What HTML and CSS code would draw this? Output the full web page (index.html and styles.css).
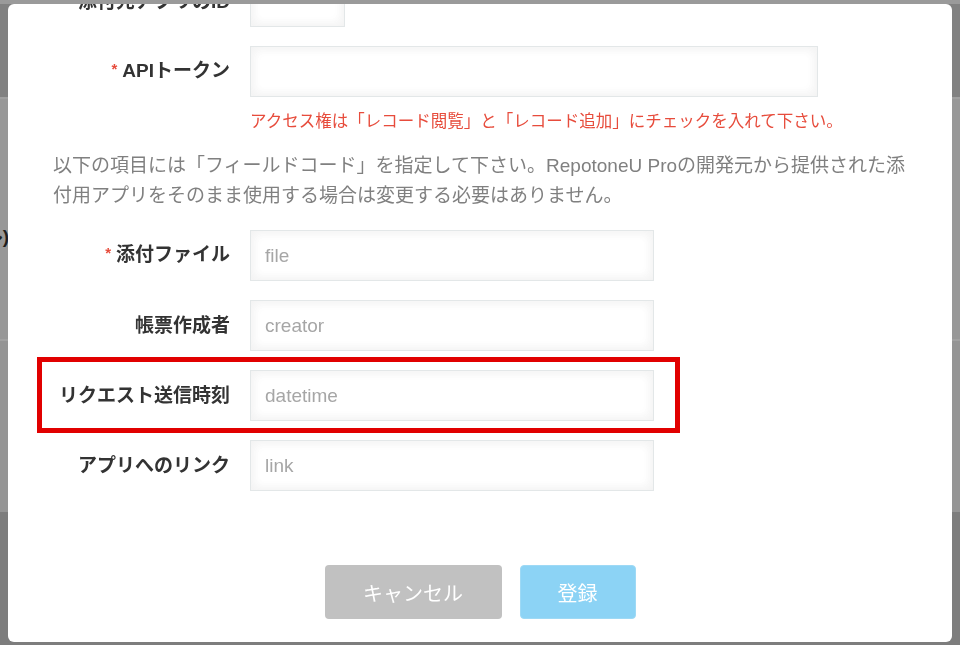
FILE: index.html
```html
<!DOCTYPE html>
<html lang="ja">
<head>
    <meta charset="UTF-8">
    <meta name="viewport" content="width=device-width, initial-scale=1.0">
    <title>RepotoneU Pro 添付設定</title>
    <link rel="stylesheet" href="styles.css">
</head>
<body>
    <!-- page behind the dialog -->
    <div class="page">
        <div class="page-label">（ファイル)</div>
    </div>

    <div class="modal">
        <div class="modal-body">
            <div class="row">
                <label class="label">添付先アプリのID</label>
                <input class="text short" type="text">
            </div>
            <div class="row">
                <label class="label"><span class="req">*</span>APIトークン</label>
                <input class="text wide" type="text">
            </div>
            <p class="error">アクセス権は「レコード閲覧」と「レコード追加」にチェックを入れて下さい。</p>
            <p class="desc">以下の項目には「フィールドコード」を指定して下さい。RepotoneU Proの開発元から提供された添付用アプリをそのまま使用する場合は変更する必要はありません。</p>
            <div class="row">
                <label class="label"><span class="req">*</span>添付ファイル</label>
                <input class="text" type="text" placeholder="file">
            </div>
            <div class="row">
                <label class="label">帳票作成者</label>
                <input class="text" type="text" placeholder="creator">
            </div>
            <div class="row marked">
                <label class="label">リクエスト送信時刻</label>
                <input class="text" type="text" placeholder="datetime">
            </div>
            <div class="row">
                <label class="label">アプリへのリンク</label>
                <input class="text" type="text" placeholder="link">
            </div>
            <div class="buttons">
                <button class="btn cancel" type="button">キャンセル</button>
                <button class="btn submit" type="button">登録</button>
            </div>
        </div>
    </div>
</body>
</html>
```

FILE: styles.css
```css
/* Basic Styling */
body {
    margin: 0;
    height: 645px;
    overflow: hidden;
    font-family: "Liberation Sans", "Noto Sans CJK JP", sans-serif;
    color: #333;
    background: linear-gradient(to bottom,
        #9a9a9a 0, #9a9a9a 4px,
        #818181 4px, #818181 97px,
        #a0a0a0 97px, #a0a0a0 99px,
        #989898 99px, #989898 339px,
        #a2a2a2 339px, #a2a2a2 341px,
        #959595 341px, #959595 512px,
        #7d7d7d 512px);
}
.page {
    padding-top: 225px;
}
.page-label {
    display: flex;
    justify-content: flex-end;
    width: 9px;
    overflow: hidden;
    white-space: nowrap;
    font-size: 19px;
    font-weight: bold;
    line-height: 24px;
    color: #1e1e1e;
}

/* dialog */
.modal {
    position: fixed;
    left: 8px;
    top: 4px;
    width: 944px;
    height: 638px;
    background-color: #fff;
    border-radius: 6px;
    overflow: hidden;
}
.modal-body {
    margin-top: -28px;
    padding: 0 37px 0 45px;
}
.row {
    position: relative;
    display: flex;
    align-items: center;
    gap: 20px;
    margin-bottom: 19px;
}
.label {
    width: 177px;
    flex-shrink: 0;
    text-align: right;
    font-size: 19px;
    font-weight: bold;
    line-height: 24px;
    color: #333;
}
.req {
    position: relative;
    top: -3px;
    margin-right: 5px;
    font-size: 15px;
    color: #e74c3c;
}
.text {
    box-sizing: border-box;
    width: 404px;
    height: 51px;
    margin: 0;
    padding: 0 14px;
    font-family: inherit;
    font-size: 19px;
    color: #333;
    background-color: #fff;
    border: 1px solid #e3e7e8;
    border-radius: 0;
    box-shadow: 1px 1px 12px #f3f3f3 inset, -1px -1px 12px #f3f3f3 inset;
    outline: none;
}
.text::placeholder {
    color: #a6a6a6;
}
.text.short {
    width: 95px;
}
.text.wide {
    width: 568px;
}
.row:nth-child(2) {
    margin-bottom: 0;
}
.error {
    margin: 12px 0 0 197px;
    font-size: 16.5px;
    line-height: 24px;
    color: #e74c3c;
}
.desc {
    margin: 18px 0 19px 0;
    font-size: 19px;
    line-height: 30px;
    color: #808080;
}

/* annotation around the highlighted row */
.marked::after {
    content: "";
    position: absolute;
    left: -16px;
    top: -13px;
    width: 643px;
    height: 76px;
    box-sizing: border-box;
    border: 5px solid #e10000;
}

.buttons {
    display: flex;
    justify-content: center;
    gap: 18px;
    margin: 74px 0 0 -8px;
}
.btn {
    height: 54px;
    font-family: inherit;
    font-size: 20px;
    color: #fff;
    border: none;
    border-radius: 4px;
    cursor: pointer;
}
.cancel {
    width: 177px;
    background-color: #c1c1c1;
}
.submit {
    width: 116px;
    background-color: #8cd3f5;
    border: 1px solid #9ed9f5;
}
```
